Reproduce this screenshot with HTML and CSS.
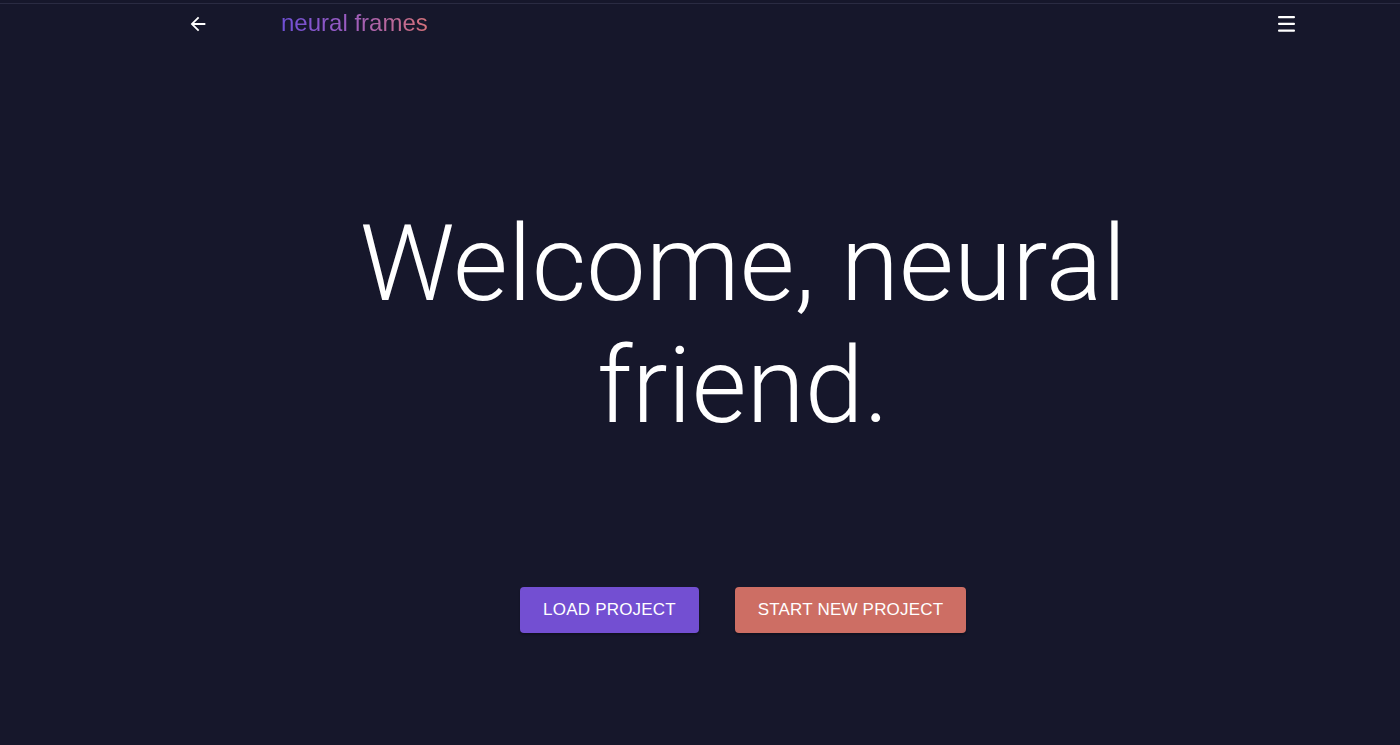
FILE: index.html
```html
<!DOCTYPE html>
<html lang="en">
<head>
<meta charset="utf-8">
<title>neural frames</title>
<link rel="stylesheet" href="styles.css">
</head>
<body>
<div class="topline"></div>
<div class="page">
  <header class="header">
    <button class="icon-btn back" aria-label="Back">
      <svg width="22" height="22" viewBox="0 0 24 24"><path d="M20 11H7.83l5.59-5.59L12 4l-8 8 8 8 1.41-1.41L7.83 13H20v-2z" fill="#fff"/></svg>
    </button>
    <div class="logo">neural frames</div>
    <div class="spacer"></div>
    <button class="icon-btn menu" aria-label="Menu">
      <svg width="17" height="16" viewBox="0 0 17 16"><rect x="0" y="0" width="17" height="2.2" rx="1" fill="#fff"/><rect x="0" y="6.8" width="17" height="2.2" rx="1" fill="#fff"/><rect x="0" y="13.6" width="17" height="2.2" rx="1" fill="#fff"/></svg>
    </button>
  </header>
  <main class="main">
    <h1 class="title">Welcome, neural<br>friend.</h1>
    <div class="actions">
      <button class="btn btn-load">LOAD PROJECT</button>
      <button class="btn btn-new">START NEW PROJECT</button>
    </div>
  </main>
</div>
</body>
</html>
```

FILE: styles.css
```css
html, body {
  margin: 0;
  padding: 0;
  background: #16172b;
  height: 100%;
}
body {
  font-family: "Liberation Sans", Arial, sans-serif;
  color: #fff;
  overflow: hidden;
}
.topline {
  margin-top: 3px;
  height: 1px;
  background: #2a2b42;
}
.page {
  padding-left: 86px;
}
.header {
  max-width: 1128px;
  margin: 0 auto;
  height: 40px;
  display: flex;
  align-items: center;
}
.icon-btn {
  background: none;
  border: 0;
  padding: 0;
  display: flex;
  align-items: center;
  justify-content: center;
  cursor: pointer;
}
.back {
  margin-left: 8px;
}
.logo {
  margin-left: 72px;
  font-size: 24px;
  line-height: 30px;
  padding-bottom: 2px;
  background: linear-gradient(90deg, #6f4fd6 0%, #9a5cc0 45%, #d4717a 100%);
  -webkit-background-clip: text;
  background-clip: text;
  color: transparent;
}
.spacer {
  flex: 1;
}
.menu {
  margin-right: 12px;
}
.main {
  display: flex;
  flex-direction: column;
  align-items: center;
}
.title {
  margin: 159px 0 0;
  font-family: Roboto, "Liberation Sans", sans-serif;
  font-weight: 300;
  font-size: 106px;
  line-height: 122px;
  text-align: center;
  letter-spacing: 0;
}
.actions {
  margin-top: 140px;
  display: flex;
  gap: 36px;
}
.btn {
  height: 46px;
  border: 0;
  border-radius: 4px;
  color: #fff;
  font-family: "Liberation Sans", Arial, sans-serif;
  font-size: 17px;
  font-weight: 500;
  padding: 0;
  letter-spacing: 0.2px;
  cursor: pointer;
  box-shadow: 0 2px 2px rgba(0,0,0,0.25);
}
.btn-load {
  background: #734fd2;
  width: 179px;
}
.btn-new {
  background: #cd6e64;
  width: 231px;
}
```
